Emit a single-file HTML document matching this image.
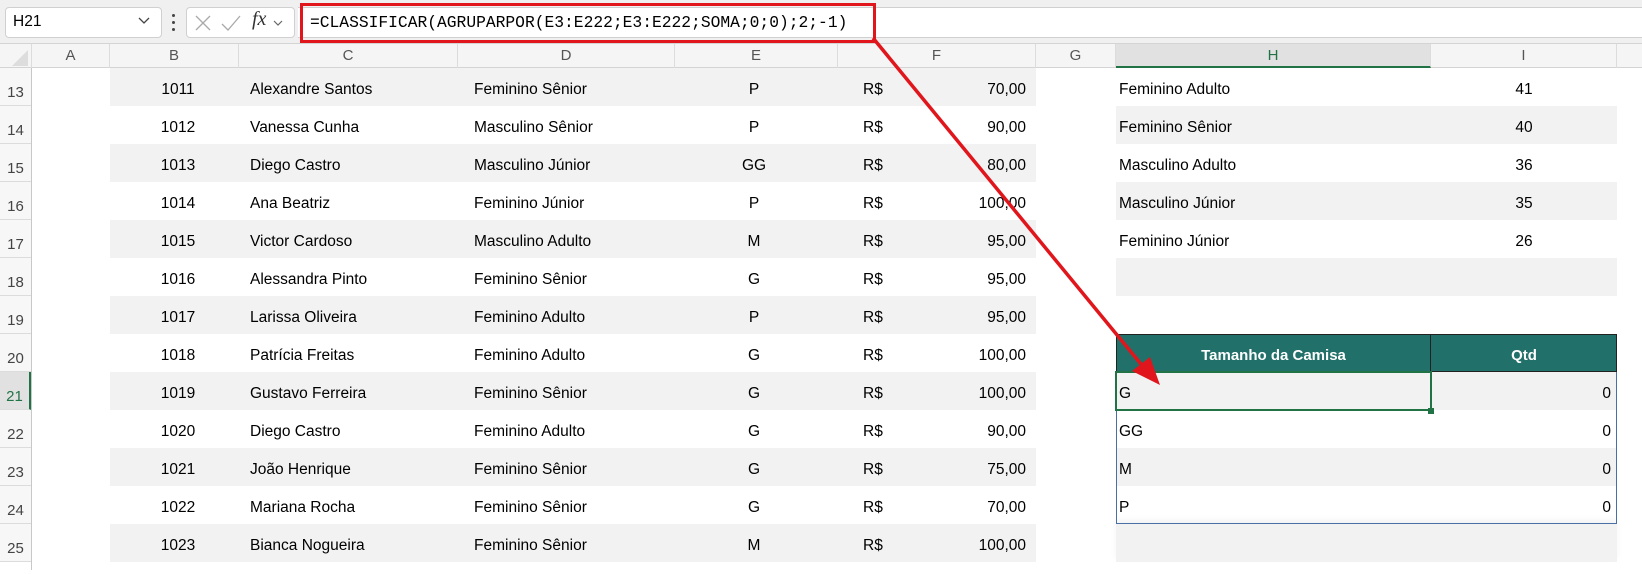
<!DOCTYPE html>
<html><head><meta charset="utf-8">
<style>
*{margin:0;padding:0;box-sizing:border-box}
body{width:1642px;height:570px;overflow:hidden;background:#fff;position:relative;font-family:"Liberation Sans",Arial,sans-serif;color:#000}
.a{position:absolute}
.t{position:absolute;font-size:15.5px;line-height:38px;padding-top:3px;white-space:nowrap}
.band{position:absolute;background:#f2f2f2;height:38px}
.rn{position:absolute;left:0;width:31px;height:38px;font-size:15px;color:#444;text-align:center;line-height:50px;border-bottom:1px solid #dcdcdc;background:#f7f7f7}
.ch{position:absolute;top:44px;height:24px;font-size:15px;color:#555;text-align:center;line-height:24px;border-right:1px solid #dcdcdc}
</style></head><body>
<div class="a" style="left:0;top:0;width:1642px;height:44px;background:#f0f0f0;border-bottom:1px solid #d4d4d4"></div>
<div class="a" style="left:5px;top:7px;width:157px;height:31px;background:#fff;border:1px solid #d0d0d0;border-radius:4px"></div>
<div class="t" style="left:13px;top:0px;font-size:15.5px">H21</div>
<svg class="a" style="left:138px;top:17px" width="12" height="8"><path d="M1 1 L6 6 L11 1" stroke="#444" stroke-width="1.3" fill="none"/></svg>
<div class="a" style="left:172px;top:14px;width:3px;height:3px;background:#444;border-radius:2px"></div>
<div class="a" style="left:172px;top:21px;width:3px;height:3px;background:#444;border-radius:2px"></div>
<div class="a" style="left:172px;top:28px;width:3px;height:3px;background:#444;border-radius:2px"></div>
<div class="a" style="left:186px;top:7px;width:109px;height:31px;background:#fff;border:1px solid #d0d0d0;border-radius:4px"></div>
<svg class="a" style="left:194px;top:14px" width="90" height="20"><path d="M2 2 L16 16 M16 2 L2 16" stroke="#aaa" stroke-width="1.3"/><path d="M28 10 L34 16 L46 2" stroke="#aaa" stroke-width="1.3" fill="none"/><path d="M80 7 L84 11 L88 7" stroke="#666" stroke-width="1.2" fill="none"/></svg>
<div class="a" style="left:252px;top:8px;font-family:'Liberation Serif',serif;font-style:italic;font-size:20px;color:#333">fx</div>
<div class="a" style="left:298px;top:7px;width:1344px;height:31px;background:#fff;border-top:1px solid #d0d0d0;border-bottom:1px solid #d0d0d0"></div>
<div class="a" style="left:300px;top:3px;width:576px;height:40px;border:3.5px solid #e0161c"></div>
<div class="a" style="left:310px;top:11px;font-family:'Liberation Mono',monospace;font-size:16.3px;line-height:24px">=CLASSIFICAR(AGRUPARPOR(E3:E222;E3:E222;SOMA;0;0);2;-1)</div>
<div class="a" style="left:0;top:44px;width:1642px;height:24px;background:#f5f5f5;border-bottom:1px solid #d4d4d4"></div>
<svg class="a" style="left:12px;top:50px" width="16" height="16"><path d="M16 0 L16 16 L0 16Z" fill="#ddd"/></svg>
<div class="ch" style="left:31px;width:79px;border-left:1px solid #dcdcdc">A</div>
<div class="ch" style="left:110px;width:129px">B</div>
<div class="ch" style="left:239px;width:219px">C</div>
<div class="ch" style="left:458px;width:217px">D</div>
<div class="ch" style="left:675px;width:163px">E</div>
<div class="ch" style="left:838px;width:198px">F</div>
<div class="ch" style="left:1036px;width:80px">G</div>
<div class="ch" style="left:1116px;width:315px;background:#e1e1e1;color:#217346;border-bottom:2px solid #217346">H</div>
<div class="ch" style="left:1431px;width:186px">I</div>
<div class="a" style="left:31px;top:68px;width:1px;height:502px;background:#c8c8c8"></div>

<div class="band" style="left:110px;top:68px;width:926px"></div>
<div class="band" style="left:110px;top:144px;width:926px"></div>
<div class="band" style="left:110px;top:220px;width:926px"></div>
<div class="band" style="left:110px;top:296px;width:926px"></div>
<div class="band" style="left:110px;top:372px;width:926px"></div>
<div class="band" style="left:110px;top:448px;width:926px"></div>
<div class="band" style="left:110px;top:524px;width:926px"></div>
<div class="band" style="left:1116px;top:106px;width:501px"></div>
<div class="band" style="left:1116px;top:182px;width:501px"></div>
<div class="band" style="left:1116px;top:258px;width:501px"></div>
<div class="band" style="left:1116px;top:372px;width:501px"></div>
<div class="band" style="left:1116px;top:448px;width:501px"></div>
<div class="band" style="left:1116px;top:524px;width:501px;box-shadow:0 -4px 6px rgba(0,0,0,0.05)"></div>
<div class="a" style="left:1116px;top:334px;width:315px;height:38px;background:#21706a;border:1px solid #222"></div>
<div class="a" style="left:1431px;top:334px;width:186px;height:38px;background:#21706a;border:1px solid #222;border-left:none"></div>
<div class="t" style="left:1116px;top:334px;width:315px;text-align:center;color:#fff;font-weight:bold;font-size:15px">Tamanho da Camisa</div>
<div class="t" style="left:1431px;top:334px;width:186px;text-align:center;color:#fff;font-weight:bold;font-size:15px">Qtd</div>
<div class="a" style="left:1116px;top:372px;width:501px;height:152px;border:1px solid #4a6fa5;border-top:none"></div>
<div class="a" style="left:1115px;top:371px;width:317px;height:40px;border:2px solid #217346"></div>
<div class="a" style="left:1428px;top:408px;width:6px;height:6px;background:#217346"></div>

<div class="rn" style="top:68px">13</div><div class="rn" style="top:106px">14</div><div class="rn" style="top:144px">15</div><div class="rn" style="top:182px">16</div><div class="rn" style="top:220px">17</div><div class="rn" style="top:258px">18</div><div class="rn" style="top:296px">19</div><div class="rn" style="top:334px">20</div><div class="rn" style="top:372px;background:#e1e1e1;color:#217346;border-right:2px solid #217346">21</div><div class="rn" style="top:410px">22</div><div class="rn" style="top:448px">23</div><div class="rn" style="top:486px">24</div><div class="rn" style="top:524px">25</div>

<div class="t" style="left:110px;top:68px;width:136px;text-align:center">1011</div><div class="t" style="left:250px;top:68px">Alexandre Santos</div><div class="t" style="left:474px;top:68px">Feminino Sênior</div><div class="t" style="left:694px;top:68px;width:120px;text-align:center">P</div><div class="t" style="left:863px;top:68px">R$</div><div class="t" style="left:926px;top:68px;width:100px;text-align:right">70,00</div>
<div class="t" style="left:110px;top:106px;width:136px;text-align:center">1012</div><div class="t" style="left:250px;top:106px">Vanessa Cunha</div><div class="t" style="left:474px;top:106px">Masculino Sênior</div><div class="t" style="left:694px;top:106px;width:120px;text-align:center">P</div><div class="t" style="left:863px;top:106px">R$</div><div class="t" style="left:926px;top:106px;width:100px;text-align:right">90,00</div>
<div class="t" style="left:110px;top:144px;width:136px;text-align:center">1013</div><div class="t" style="left:250px;top:144px">Diego Castro</div><div class="t" style="left:474px;top:144px">Masculino Júnior</div><div class="t" style="left:694px;top:144px;width:120px;text-align:center">GG</div><div class="t" style="left:863px;top:144px">R$</div><div class="t" style="left:926px;top:144px;width:100px;text-align:right">80,00</div>
<div class="t" style="left:110px;top:182px;width:136px;text-align:center">1014</div><div class="t" style="left:250px;top:182px">Ana Beatriz</div><div class="t" style="left:474px;top:182px">Feminino Júnior</div><div class="t" style="left:694px;top:182px;width:120px;text-align:center">P</div><div class="t" style="left:863px;top:182px">R$</div><div class="t" style="left:926px;top:182px;width:100px;text-align:right">100,00</div>
<div class="t" style="left:110px;top:220px;width:136px;text-align:center">1015</div><div class="t" style="left:250px;top:220px">Victor Cardoso</div><div class="t" style="left:474px;top:220px">Masculino Adulto</div><div class="t" style="left:694px;top:220px;width:120px;text-align:center">M</div><div class="t" style="left:863px;top:220px">R$</div><div class="t" style="left:926px;top:220px;width:100px;text-align:right">95,00</div>
<div class="t" style="left:110px;top:258px;width:136px;text-align:center">1016</div><div class="t" style="left:250px;top:258px">Alessandra Pinto</div><div class="t" style="left:474px;top:258px">Feminino Sênior</div><div class="t" style="left:694px;top:258px;width:120px;text-align:center">G</div><div class="t" style="left:863px;top:258px">R$</div><div class="t" style="left:926px;top:258px;width:100px;text-align:right">95,00</div>
<div class="t" style="left:110px;top:296px;width:136px;text-align:center">1017</div><div class="t" style="left:250px;top:296px">Larissa Oliveira</div><div class="t" style="left:474px;top:296px">Feminino Adulto</div><div class="t" style="left:694px;top:296px;width:120px;text-align:center">P</div><div class="t" style="left:863px;top:296px">R$</div><div class="t" style="left:926px;top:296px;width:100px;text-align:right">95,00</div>
<div class="t" style="left:110px;top:334px;width:136px;text-align:center">1018</div><div class="t" style="left:250px;top:334px">Patrícia Freitas</div><div class="t" style="left:474px;top:334px">Feminino Adulto</div><div class="t" style="left:694px;top:334px;width:120px;text-align:center">G</div><div class="t" style="left:863px;top:334px">R$</div><div class="t" style="left:926px;top:334px;width:100px;text-align:right">100,00</div>
<div class="t" style="left:110px;top:372px;width:136px;text-align:center">1019</div><div class="t" style="left:250px;top:372px">Gustavo Ferreira</div><div class="t" style="left:474px;top:372px">Feminino Sênior</div><div class="t" style="left:694px;top:372px;width:120px;text-align:center">G</div><div class="t" style="left:863px;top:372px">R$</div><div class="t" style="left:926px;top:372px;width:100px;text-align:right">100,00</div>
<div class="t" style="left:110px;top:410px;width:136px;text-align:center">1020</div><div class="t" style="left:250px;top:410px">Diego Castro</div><div class="t" style="left:474px;top:410px">Feminino Adulto</div><div class="t" style="left:694px;top:410px;width:120px;text-align:center">G</div><div class="t" style="left:863px;top:410px">R$</div><div class="t" style="left:926px;top:410px;width:100px;text-align:right">90,00</div>
<div class="t" style="left:110px;top:448px;width:136px;text-align:center">1021</div><div class="t" style="left:250px;top:448px">João Henrique</div><div class="t" style="left:474px;top:448px">Feminino Sênior</div><div class="t" style="left:694px;top:448px;width:120px;text-align:center">G</div><div class="t" style="left:863px;top:448px">R$</div><div class="t" style="left:926px;top:448px;width:100px;text-align:right">75,00</div>
<div class="t" style="left:110px;top:486px;width:136px;text-align:center">1022</div><div class="t" style="left:250px;top:486px">Mariana Rocha</div><div class="t" style="left:474px;top:486px">Feminino Sênior</div><div class="t" style="left:694px;top:486px;width:120px;text-align:center">G</div><div class="t" style="left:863px;top:486px">R$</div><div class="t" style="left:926px;top:486px;width:100px;text-align:right">70,00</div>
<div class="t" style="left:110px;top:524px;width:136px;text-align:center">1023</div><div class="t" style="left:250px;top:524px">Bianca Nogueira</div><div class="t" style="left:474px;top:524px">Feminino Sênior</div><div class="t" style="left:694px;top:524px;width:120px;text-align:center">M</div><div class="t" style="left:863px;top:524px">R$</div><div class="t" style="left:926px;top:524px;width:100px;text-align:right">100,00</div>

<div class="t" style="left:1119px;top:68px">Feminino Adulto</div><div class="t" style="left:1474px;top:68px;width:100px;text-align:center">41</div>
<div class="t" style="left:1119px;top:106px">Feminino Sênior</div><div class="t" style="left:1474px;top:106px;width:100px;text-align:center">40</div>
<div class="t" style="left:1119px;top:144px">Masculino Adulto</div><div class="t" style="left:1474px;top:144px;width:100px;text-align:center">36</div>
<div class="t" style="left:1119px;top:182px">Masculino Júnior</div><div class="t" style="left:1474px;top:182px;width:100px;text-align:center">35</div>
<div class="t" style="left:1119px;top:220px">Feminino Júnior</div><div class="t" style="left:1474px;top:220px;width:100px;text-align:center">26</div>
<div class="t" style="left:1119px;top:372px">G</div><div class="t" style="left:1511px;top:372px;width:100px;text-align:right">0</div>
<div class="t" style="left:1119px;top:410px">GG</div><div class="t" style="left:1511px;top:410px;width:100px;text-align:right">0</div>
<div class="t" style="left:1119px;top:448px">M</div><div class="t" style="left:1511px;top:448px;width:100px;text-align:right">0</div>
<div class="t" style="left:1119px;top:486px">P</div><div class="t" style="left:1511px;top:486px;width:100px;text-align:right">0</div>

<svg class="a" style="left:0;top:0" width="1642" height="570">
<line x1="873" y1="38" x2="1145" y2="369" stroke="#e0161c" stroke-width="3.5"/>
<path d="M1160 385 L1132 371 L1150 357 Z" fill="#e0161c"/>
</svg>
</body></html>
